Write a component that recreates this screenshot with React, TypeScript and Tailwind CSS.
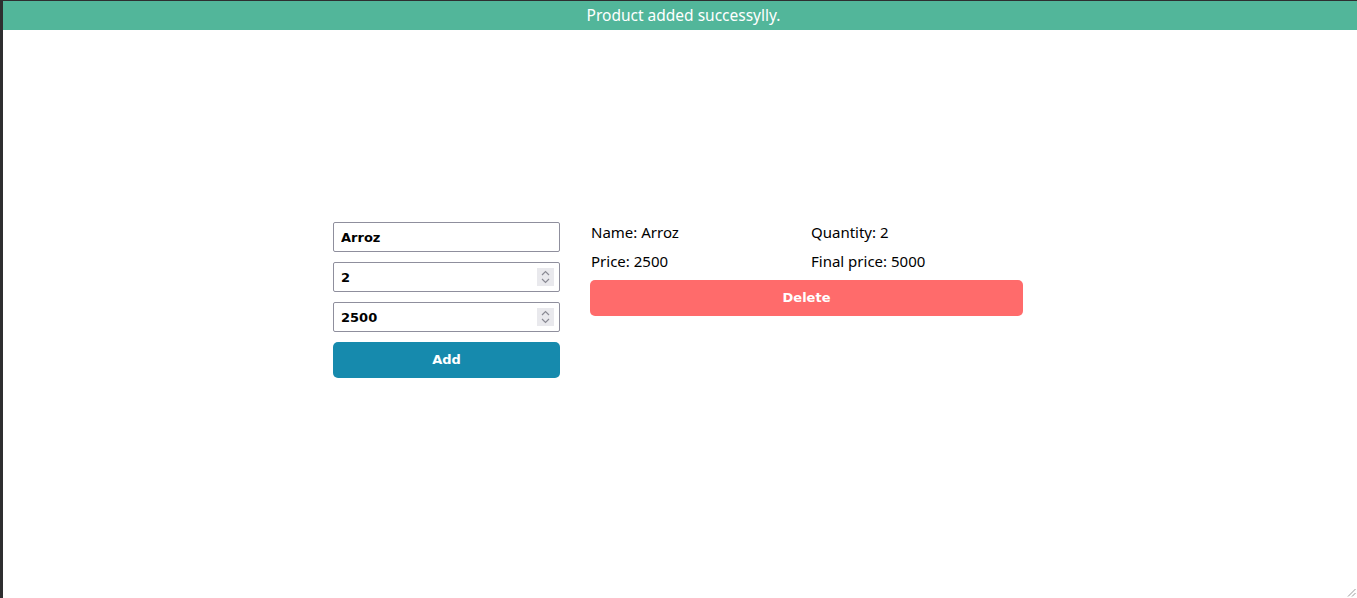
import React from 'react';

const Spinner = () => (
  <span className="absolute right-[6px] top-1/2 flex h-[18px] w-[17px] -translate-y-1/2 flex-col items-center justify-center bg-[#e9e9ed]">
    <svg width="9" height="14" viewBox="0 0 9 14" fill="none" stroke="#8a8a94" strokeWidth="1.2">
      <path d="M1 5 L4.5 1.5 L8 5" />
      <path d="M1 9 L4.5 12.5 L8 9" />
    </svg>
  </span>
);

const Field = ({ value, spin }: { value: string; spin?: boolean }) => (
  <div className="relative">
    <input
      readOnly
      value={value}
      className="h-[30px] w-full rounded-[2px] border border-[#8f8f9d] bg-white px-[7px] text-[13px] font-bold text-black outline-none"
      style={{ fontFamily: '"DejaVu Sans", Verdana, sans-serif' }}
    />
    {spin && <Spinner />}
  </div>
);

export default function App() {
  return (
    <div
      className="relative flex h-[598px] w-full flex-col border-l-[3px] border-t border-[#2e2e30] bg-white"
      style={{ fontFamily: '"Noto Sans", "Open Sans", sans-serif' }}
    >
      <div className="flex h-[29px] items-center justify-center bg-[#52b69a] pl-[7px] text-[15.5px] text-white">
        Product added successylly.
      </div>

      <div className="flex justify-center gap-[30px] pt-[192px] pr-[4px]">
        <div className="flex w-[227px] flex-col gap-[10px]">
          <Field value="Arroz" />
          <Field value="2" spin />
          <Field value="2500" spin />
          <button
            className="h-[36px] rounded-[5px] bg-[#168aad] text-[13px] font-bold text-white"
            style={{ fontFamily: '"DejaVu Sans", Verdana, sans-serif' }}
          >
            Add
          </button>
        </div>

        <div className="flex w-[433px] flex-col">
          <div className="-mt-[2px] grid grid-cols-[220px_1fr] gap-y-[5px] pl-px text-[15px] leading-[24px] text-black">
            <span>Name: Arroz</span>
            <span>Quantity: 2</span>
            <span>Price: 2500</span>
            <span>Final price: 5000</span>
          </div>
          <button
            className="mt-[7px] h-[36px] rounded-[5px] bg-[#ff6b6b] text-[13px] font-bold text-white"
            style={{ fontFamily: '"DejaVu Sans", Verdana, sans-serif' }}
          >
            Delete
          </button>
        </div>
      </div>

      <svg className="absolute bottom-[1px] right-[1px]" width="9" height="9" viewBox="0 0 9 9" stroke="#9a9a9a" strokeWidth="1">
        <path d="M8.5 1 L1 8.5" />
        <path d="M8.5 5 L5 8.5" />
      </svg>
    </div>
  );
}
